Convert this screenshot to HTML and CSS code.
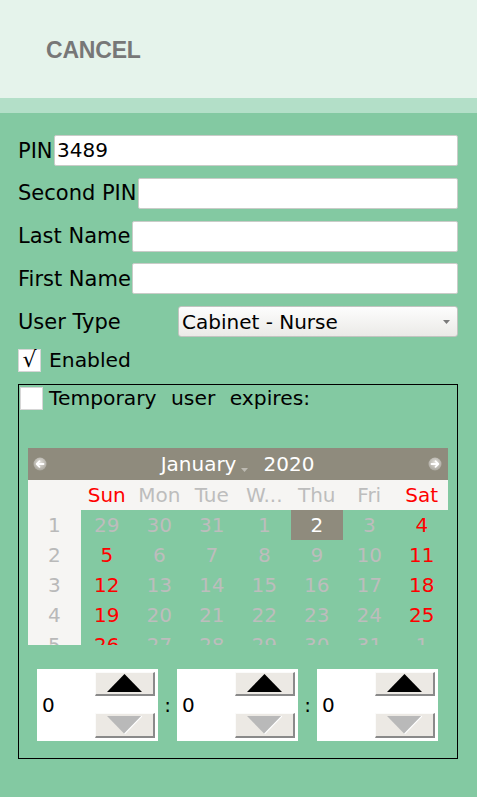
FILE: index.html
```html
<!DOCTYPE html>
<html>
<head>
<meta charset="utf-8">
<title>User</title>
<link rel="stylesheet" href="styles.css">
</head>
<body>
<header class="topbar"><span class="cancel">CANCEL</span></header>
<div class="band"></div>
<main class="form">
  <div class="row"><span class="lbl">PIN</span><div class="field">3489</div></div>
  <div class="row"><span class="lbl">Second PIN</span><div class="field"></div></div>
  <div class="row"><span class="lbl">Last Name</span><div class="field"></div></div>
  <div class="row"><span class="lbl">First Name</span><div class="field"></div></div>
  <div class="row"><span class="lbl type-lbl">User Type</span>
    <div class="select"><span>Cabinet - Nurse</span>
      <svg class="sel-arrow" width="7" height="4" viewBox="0 0 7 4"><polygon points="0,0 7,0 3.5,4" fill="#7a7a7a"/></svg>
    </div>
  </div>
  <div class="check-row"><span class="box">√</span><span>Enabled</span></div>
  <section class="frame">
    <div class="check-row temp"><span class="box"></span><span class="temp-text">Temporary user expires:</span></div>
    <div class="calendar">
      <div class="cal-head">
        <span class="nav"><svg width="14" height="14" viewBox="0 0 14 14"><defs><radialGradient id="g1" cx="50%" cy="40%" r="60%"><stop offset="0" stop-color="#e4e2dd"/><stop offset="1" stop-color="#a9a69d"/></radialGradient></defs><circle cx="7" cy="7" r="6.5" fill="url(#g1)"/><path d="M10.5 7H4M6.5 4.2L3.7 7l2.8 2.8" stroke="#fff" stroke-width="1.8" fill="none" stroke-linecap="round" stroke-linejoin="round"/></svg></span>
        <span class="title"><span>January</span><svg class="mini" width="7" height="4" viewBox="0 0 7 4"><polygon points="0,0 7,0 3.5,4" fill="#bdbab2"/></svg><span>2020</span></span>
        <span class="nav"><svg width="14" height="14" viewBox="0 0 14 14"><defs><radialGradient id="g2" cx="50%" cy="40%" r="60%"><stop offset="0" stop-color="#e4e2dd"/><stop offset="1" stop-color="#a9a69d"/></radialGradient></defs><circle cx="7" cy="7" r="6.5" fill="url(#g2)"/><path d="M3.5 7H10M7.5 4.2L10.3 7l-2.8 2.8" stroke="#fff" stroke-width="1.8" fill="none" stroke-linecap="round" stroke-linejoin="round"/></svg></span>
      </div>
      <div class="cal-grid">
        <span class="wk"></span><span class="dn red">Sun</span><span class="dn">Mon</span><span class="dn">Tue</span><span class="dn">W...</span><span class="dn">Thu</span><span class="dn">Fri</span><span class="dn red">Sat</span>
        <span class="wk">1</span><span>29</span><span>30</span><span>31</span><span>1</span><span class="sel">2</span><span>3</span><span class="red">4</span>
        <span class="wk">2</span><span class="red">5</span><span>6</span><span>7</span><span>8</span><span>9</span><span>10</span><span class="red">11</span>
        <span class="wk">3</span><span class="red">12</span><span>13</span><span>14</span><span>15</span><span>16</span><span>17</span><span class="red">18</span>
        <span class="wk">4</span><span class="red">19</span><span>20</span><span>21</span><span>22</span><span>23</span><span>24</span><span class="red">25</span>
        <span class="wk">5</span><span class="red">26</span><span>27</span><span>28</span><span>29</span><span>30</span><span>31</span><span>1</span>
      </div>
    </div>
    <div class="spinners">
      <div class="spin"><span class="val">0</span><div class="btns">
        <span class="btn up"><svg width="35" height="18" viewBox="0 0 35 18"><polygon points="0,18 17.5,0 35,18" fill="#000"/></svg></span>
        <span class="btn down"><svg width="35" height="18" viewBox="0 0 35 18"><polygon points="0,0 35,0 17.5,18" fill="#b9b9b9"/><line x1="35" y1="0" x2="17.5" y2="18" stroke="#fff" stroke-width="1.2"/></svg></span>
      </div></div>
      <span class="colon">:</span>
      <div class="spin"><span class="val">0</span><div class="btns">
        <span class="btn up"><svg width="35" height="18" viewBox="0 0 35 18"><polygon points="0,18 17.5,0 35,18" fill="#000"/></svg></span>
        <span class="btn down"><svg width="35" height="18" viewBox="0 0 35 18"><polygon points="0,0 35,0 17.5,18" fill="#b9b9b9"/><line x1="35" y1="0" x2="17.5" y2="18" stroke="#fff" stroke-width="1.2"/></svg></span>
      </div></div>
      <span class="colon">:</span>
      <div class="spin"><span class="val">0</span><div class="btns">
        <span class="btn up"><svg width="35" height="18" viewBox="0 0 35 18"><polygon points="0,18 17.5,0 35,18" fill="#000"/></svg></span>
        <span class="btn down"><svg width="35" height="18" viewBox="0 0 35 18"><polygon points="0,0 35,0 17.5,18" fill="#b9b9b9"/><line x1="35" y1="0" x2="17.5" y2="18" stroke="#fff" stroke-width="1.2"/></svg></span>
      </div></div>
    </div>
  </section>
</main>
</body>
</html>
```

FILE: styles.css
```css
* { box-sizing: border-box; }
html, body { margin: 0; padding: 0; }
body {
  background: #83c9a2;
  font-family: "DejaVu Sans", sans-serif;
  font-size: 20px;
  color: #000;
  width: 477px;
  min-height: 797px;
}
.topbar {
  height: 98px;
  background: #e5f3eb;
  padding: 37px 0 0 46px;
}
.cancel {
  font-family: "Liberation Sans", Arial, sans-serif;
  font-weight: bold;
  font-size: 23px;
  color: #777777;
  letter-spacing: -0.2px;
}
.band { height: 15px; background: #b3dfc8; }
.form {
  padding: 22px 19px 0 18px;
  display: flex;
  flex-direction: column;
  gap: 11.75px;
}
.row {
  display: flex;
  align-items: center;
  height: 31px;
}
.lbl { font-size: 21px; white-space: nowrap; margin-right: 1.5px; }
.type-lbl { width: 160px; margin-right: 0; }
.field {
  flex: 1;
  height: 31px;
  background: #fff;
  border: 1px solid #c9ccc8;
  border-radius: 2px;
  padding-left: 2px;
  line-height: 29px;
  font-size: 20px;
}
.select {
  flex: 1;
  height: 31px;
  display: flex;
  align-items: center;
  justify-content: space-between;
  padding: 0 7px 0 3px;
  border: 1px solid #c2c4c0;
  border-radius: 3px;
  background: linear-gradient(#fdfdfd, #ebeae7);
  font-size: 20px;
}
.sel-arrow { margin-top: 1px; }
.check-row {
  display: flex;
  align-items: center;
  height: 23px;
  font-size: 20.3px;
}
.box {
  width: 23px;
  height: 23px;
  background: #fff;
  border: 1px solid #d6d6d6;
  margin-right: 8px;
  display: flex;
  align-items: center;
  justify-content: center;
  font-size: 22px;
  line-height: 1;
}
.frame {
  border: 1px solid #000;
  height: 375px;
  padding: 2px 0 0 1px;
}
.temp .box { margin-right: 6px; }
.temp-text { word-spacing: 8px; }
.calendar {
  margin: 38px 0 0 8px;
  width: 420px;
  height: 197px;
  overflow: hidden;
}
.cal-head {
  height: 32px;
  background: #8f8b7d;
  display: flex;
  align-items: center;
  justify-content: space-between;
  padding: 0 6px 0 5px;
  color: #fff;
}
.nav { display: flex; }
.title { display: flex; align-items: center; }
.title .mini { margin: 12px 15px 0 5px; }
.cal-grid {
  display: grid;
  grid-template-columns: repeat(8, 52.5px);
  grid-auto-rows: 30px;
  color: #bdbdbd;
}
.cal-grid span {
  display: flex;
  align-items: center;
  justify-content: center;
}
.cal-grid .wk { background: #f6f5f3; color: #b9b9b9; }
.cal-grid .dn { background: #f6f5f3; color: #bdbdbd; }
.cal-grid .red { color: #ff0000; }
.cal-grid .sel { background: #8f8b7d; color: #fff; }
.spinners {
  display: flex;
  align-items: center;
  margin: 24px 0 0 17px;
}
.spin {
  width: 121px;
  height: 72px;
  background: #fff;
  display: flex;
  justify-content: space-between;
}
.val { padding-left: 5px; align-self: center; }
.btns {
  display: flex;
  flex-direction: column;
  justify-content: space-between;
  padding: 3px 3px 3px 0;
}
.btn {
  width: 60px;
  height: 24px;
  background: #ece9e4;
  border-style: solid;
  border-width: 1px 2px 2px 1px;
  border-color: #fbfbfa #8a8a8a #8a8a8a #fbfbfa;
  display: flex;
  align-items: center;
  justify-content: center;
}
.btn.down { height: 25px; }
.colon { width: 19px; text-align: center; font-size: 20px; }
```
